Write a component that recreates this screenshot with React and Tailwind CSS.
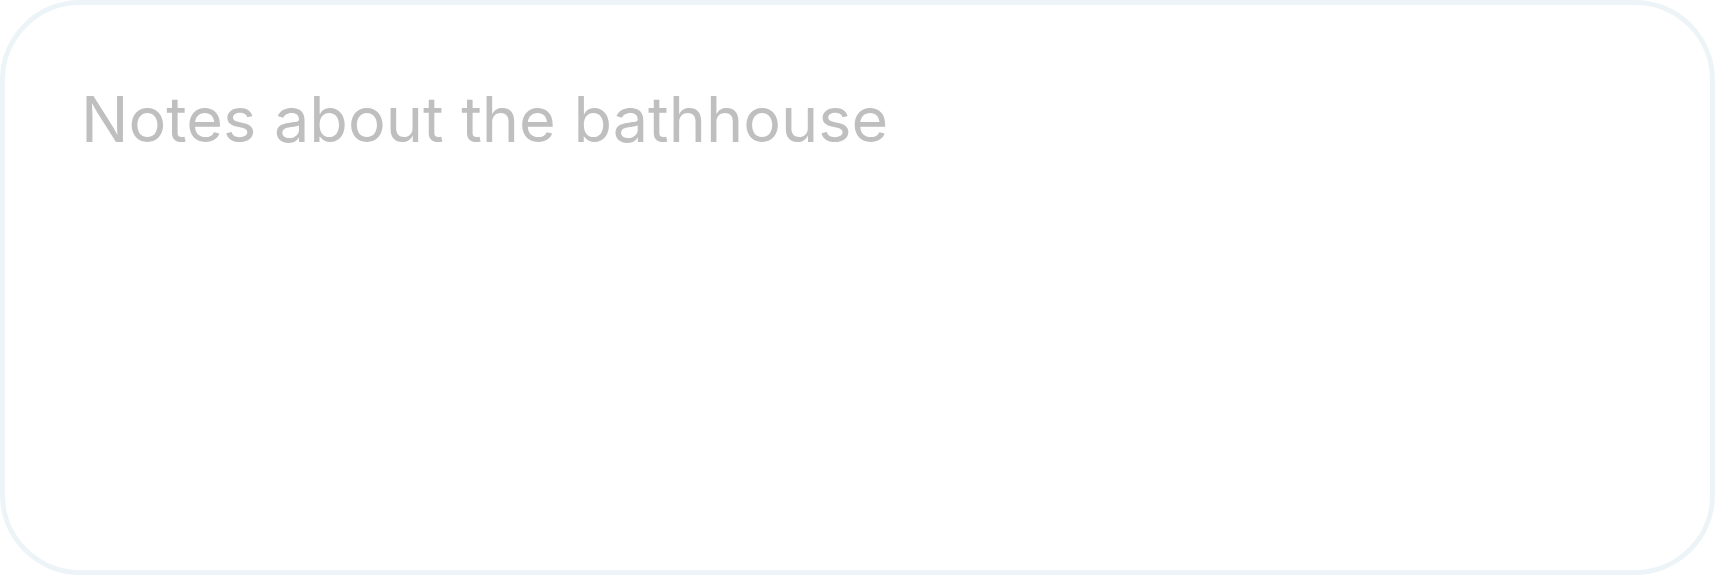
export default function App() {
  return (
    <div className="w-[1715px] h-[575px] bg-white">
      <div className="h-full border-[5px] border-[#edf4f8] rounded-[80px] px-[76px] pt-[83px]">
        <h1 className="text-[63px] leading-[63px] text-[#bfbfbf] font-normal [font-family:Inter,'Liberation_Sans',sans-serif]">
          Notes about the bathhouse
        </h1>
      </div>
    </div>
  );
}
